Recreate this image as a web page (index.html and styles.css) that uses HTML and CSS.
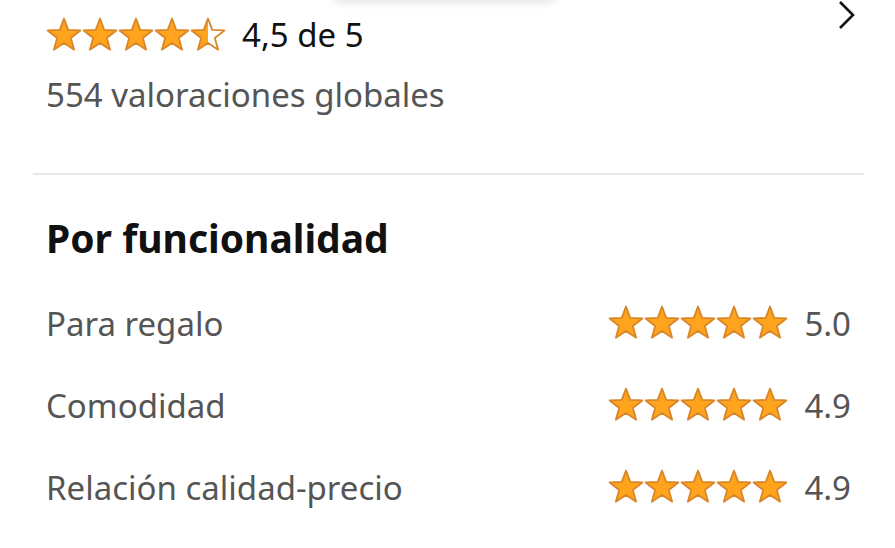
FILE: index.html
```html
<!DOCTYPE html>
<html lang="es">
<head>
<meta charset="utf-8">
<link rel="stylesheet" href="styles.css">
</head>
<body>
<svg width="0" height="0" class="defs">
  <defs>
    <symbol id="star" viewBox="0 0 24 24">
      <path d="M12 1 L14.82 8.62 L22.94 8.95 L16.56 13.98 L18.76 21.8 L12 17.3 L5.24 21.8 L7.44 13.98 L1.06 8.95 L9.18 8.62 Z" fill="#ffa41c" stroke="#d9862a" stroke-width="1.2" stroke-linejoin="round"/>
    </symbol>
    <clipPath id="lefthalf"><rect x="0" y="0" width="12" height="24"/></clipPath>
    <symbol id="halfstar" viewBox="0 0 24 24">
      <path d="M12 1 L14.82 8.62 L22.94 8.95 L16.56 13.98 L18.76 21.8 L12 17.3 L5.24 21.8 L7.44 13.98 L1.06 8.95 L9.18 8.62 Z" fill="#fff"/>
      <path clip-path="url(#lefthalf)" d="M12 1 L14.82 8.62 L22.94 8.95 L16.56 13.98 L18.76 21.8 L12 17.3 L5.24 21.8 L7.44 13.98 L1.06 8.95 L9.18 8.62 Z" fill="#ffa41c"/>
      <path d="M12 1 L14.82 8.62 L22.94 8.95 L16.56 13.98 L18.76 21.8 L12 17.3 L5.24 21.8 L7.44 13.98 L1.06 8.95 L9.18 8.62 Z" fill="none" stroke="#d9862a" stroke-width="1.2" stroke-linejoin="round"/>
    </symbol>
  </defs>
</svg>
<div class="popup-shadow"></div>
<main class="page">
  <section class="summary">
    <div class="summary-main">
      <div class="rating-line">
        <span class="stars stars-lg">
          <svg><use href="#star"/></svg><svg><use href="#star"/></svg><svg><use href="#star"/></svg><svg><use href="#star"/></svg><svg><use href="#halfstar"/></svg>
        </span>
        <span class="rating-text">4,5 de 5</span>
      </div>
      <div class="global-count">554 valoraciones globales</div>
    </div>
    <svg class="chevron" viewBox="0 0 20 30"><path d="M3 2 L16 15 L3 28" fill="none" stroke="#111" stroke-width="2.6"/></svg>
  </section>
  <hr class="divider">
  <section class="features">
    <h2 class="features-title">Por funcionalidad</h2>
    <div class="feature-row">
      <span class="feature-name">Para regalo</span>
      <span class="feature-score">
        <span class="stars stars-sm"><svg><use href="#star"/></svg><svg><use href="#star"/></svg><svg><use href="#star"/></svg><svg><use href="#star"/></svg><svg><use href="#star"/></svg></span>
        <span class="score">5.0</span>
      </span>
    </div>
    <div class="feature-row">
      <span class="feature-name">Comodidad</span>
      <span class="feature-score">
        <span class="stars stars-sm"><svg><use href="#star"/></svg><svg><use href="#star"/></svg><svg><use href="#star"/></svg><svg><use href="#star"/></svg><svg><use href="#star"/></svg></span>
        <span class="score">4.9</span>
      </span>
    </div>
    <div class="feature-row">
      <span class="feature-name">Relación calidad-precio</span>
      <span class="feature-score">
        <span class="stars stars-sm"><svg><use href="#star"/></svg><svg><use href="#star"/></svg><svg><use href="#star"/></svg><svg><use href="#star"/></svg><svg><use href="#star"/></svg></span>
        <span class="score">4.9</span>
      </span>
    </div>
  </section>
</main>
</body>
</html>
```
FILE: styles.css
```css
html, body {
  margin: 0;
  padding: 0;
  background: #fff;
}
body {
  font-family: "Noto Sans", "Open Sans", sans-serif;
  color: #111;
  position: relative;
  width: 895px;
  height: 548px;
  overflow: hidden;
}
.defs {
  position: absolute;
  width: 0;
  height: 0;
}
.popup-shadow {
  position: absolute;
  left: 330px;
  top: -30px;
  width: 230px;
  height: 30px;
  border-radius: 14px;
  box-shadow: 0 3px 8px rgba(0,0,0,0.10);
  background: #fff;
}
.page {
  padding: 0 31px 0 33px;
}
.summary {
  display: flex;
  justify-content: space-between;
  align-items: flex-start;
  padding: 13px 0 0 13px;
  height: 173px;
  box-sizing: border-box;
}
.rating-line {
  display: flex;
  align-items: center;
  height: 44px;
}
.stars {
  display: inline-flex;
}
.stars svg {
  display: block;
}
.stars-lg svg {
  width: 36px;
  height: 36px;
}
.rating-text {
  margin-left: 16px;
  font-size: 33px;
  line-height: 44px;
  color: #111;
}
.global-count {
  margin-top: 18px;
  font-size: 33px;
  line-height: 40px;
  color: #555;
}
.chevron {
  width: 20px;
  height: 30px;
  margin-right: 7px;
  position: relative;
  top: -13px;
}
.divider {
  margin: 0;
  border: 0;
  border-top: 2px solid #e8e8e8;
}
.features {
  padding: 0 13px;
}
.features-title {
  margin: 38px 0 19px 0;
  font-size: 39px;
  line-height: 50px;
  font-weight: 700;
  color: #111;
}
.feature-row {
  display: flex;
  justify-content: space-between;
  align-items: center;
  height: 82px;
}
.feature-name {
  font-size: 33px;
  color: #555;
}
.feature-score {
  display: flex;
  align-items: center;
}
.stars-sm svg {
  width: 36px;
  height: 36px;
}
.score {
  margin-left: 16px;
  font-size: 33px;
  color: #555;
}
```
